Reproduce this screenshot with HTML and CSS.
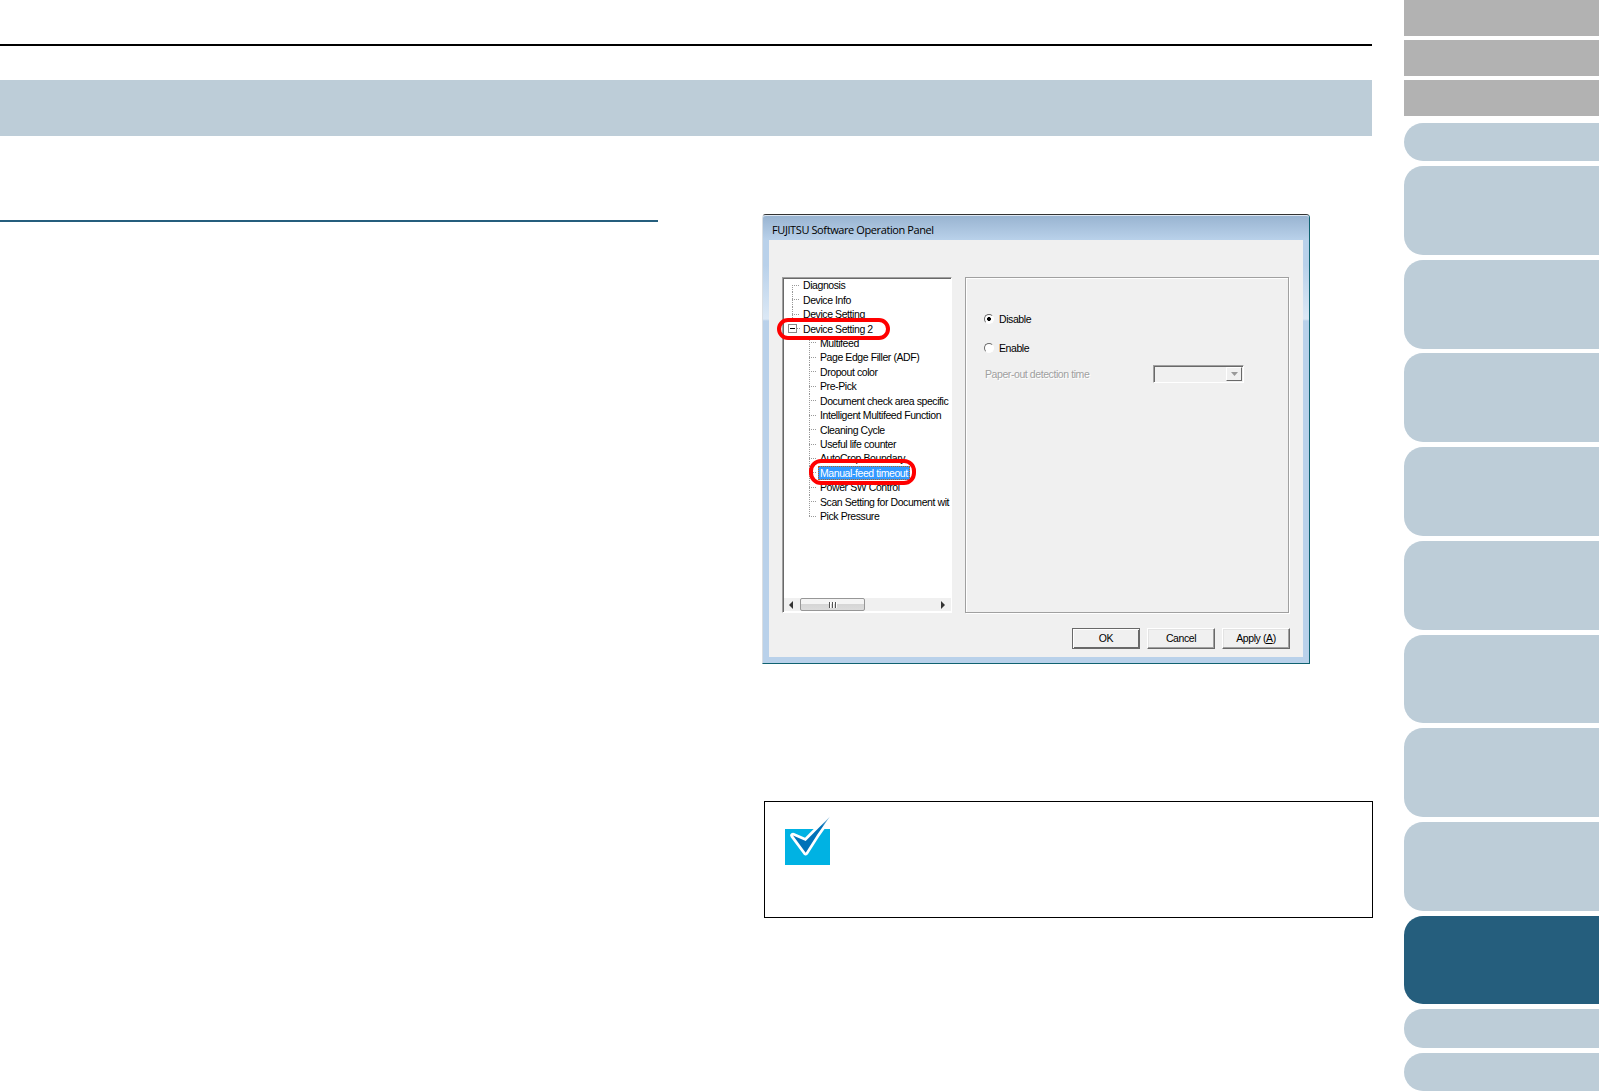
FILE: index.html
```html
<!DOCTYPE html>
<html lang="en">
<head>
    <meta charset="UTF-8">
    <meta name="viewport" content="width=device-width, initial-scale=1.0">
    <title>Manual-feed timeout</title>
    <link rel="stylesheet" href="styles.css">
</head>
<body>

    <main class="page">
        <div class="page-header"></div>
        <div class="banner"></div>

        <div class="columns">
            <div class="column-left"></div>

            <div class="column-right">
                <!-- Operation panel window -->
                <div class="dialog">
                    <div class="dialog-title">FUJITSU Software Operation Panel</div>
                    <div class="dialog-body">
                        <div class="panes">
                            <div class="tree">
                                <ul class="tree-list">
                                    <li class="first"><span>Diagnosis</span></li>
                                    <li><span>Device Info</span></li>
                                    <li><span>Device Setting</span></li>
                                    <li class="open"><i class="toggle"></i><span>Device Setting 2</span></li>
                                </ul>
                                <ul class="tree-list sub">
                                    <li><span>Multifeed</span></li>
                                    <li><span>Page Edge Filler (ADF)</span></li>
                                    <li><span>Dropout color</span></li>
                                    <li><span>Pre-Pick</span></li>
                                    <li><span>Document check area specific</span></li>
                                    <li><span>Intelligent Multifeed Function</span></li>
                                    <li><span>Cleaning Cycle</span></li>
                                    <li><span>Useful life counter</span></li>
                                    <li><span>AutoCrop Boundary</span></li>
                                    <li class="selected"><span>Manual-feed timeout</span></li>
                                    <li><span>Power SW Control</span></li>
                                    <li><span>Scan Setting for Document wit</span></li>
                                    <li class="last"><span>Pick Pressure</span></li>
                                </ul>
                                <div class="scrollbar">
                                    <svg width="4" height="8" viewBox="0 0 4 8"><path d="M4 0v8L0 4z" fill="#333"/></svg>
                                    <div class="thumb"><i></i><i></i><i></i></div>
                                    <svg width="4" height="8" viewBox="0 0 4 8"><path d="M0 0v8l4-4z" fill="#333"/></svg>
                                </div>
                            </div>

                            <div class="settings">
                                <label class="option"><i class="radio checked"></i>Disable</label>
                                <label class="option"><i class="radio"></i>Enable</label>
                                <div class="field">
                                    <span>Paper-out detection time</span>
                                    <div class="combo">
                                        <div class="combo-btn">
                                            <svg width="7" height="4" viewBox="0 0 7 4"><path d="M0 0h7L3.500 4z" fill="#999"/></svg>
                                        </div>
                                    </div>
                                </div>
                            </div>
                        </div>

                        <div class="buttons">
                            <div class="btn default">OK</div>
                            <div class="btn">Cancel</div>
                            <div class="btn">Apply (<u>A</u>)</div>
                        </div>
                    </div>
                    <div class="ring ring-parent"></div>
                    <div class="ring ring-child"></div>
                </div>

                <!-- Attention box -->
                <div class="note">
                    <svg width="46" height="50" viewBox="0 0 46 50">
                        <defs>
                            <linearGradient id="tick" x1="0" y1="1" x2="1" y2="0">
                                <stop offset="0.75" stop-color="#0071b8"/>
                                <stop offset="1" stop-color="#a9cde6"/>
                            </linearGradient>
                        </defs>
                        <path d="M0 13h45v36H0z" fill="#00b2e3"/>
                        <path d="M8 19.500L20.700 25 45 .5Q32 18 20.700 36.700z" fill="#fff" stroke="#fff" stroke-width="5.500" stroke-linejoin="round"/>
                        <path d="M8 19.500L20.700 25 45 .5Q32 18 20.700 36.700z" fill="url(#tick)"/>
                    </svg>
                </div>
            </div>
        </div>
    </main>

    <nav class="side">
        <div class="side-link"></div>
        <div class="side-link"></div>
        <div class="side-link"></div>
        <div class="tabs">
            <div class="tab short"></div>
            <div class="tab"></div>
            <div class="tab"></div>
            <div class="tab"></div>
            <div class="tab"></div>
            <div class="tab"></div>
            <div class="tab"></div>
            <div class="tab"></div>
            <div class="tab"></div>
            <div class="tab active"></div>
            <div class="tab short"></div>
            <div class="tab short"></div>
        </div>
    </nav>

</body>
</html>
```

FILE: styles.css
```css
* {
    box-sizing: border-box;
}

body {
    font-family: "Liberation Sans", Arial, sans-serif;
    margin: 0;
    display: flex;
    height: 1092px;
    overflow: hidden;
    background-color: #fff;
}

.page {
    width: 1373px;
    flex: none;
}

.page-header {
    width: 1372px;
    height: 46px;
    border-bottom: 2px solid #000;
}

.banner {
    width: 1372px;
    height: 56px;
    margin-top: 34px;
    background-color: #bdcdd8;
}

.columns {
    display: flex;
    justify-content: space-between;
    padding-top: 78px;
}

.column-left {
    width: 658px;
    height: 8px;
    border-bottom: 2px solid #255e7d;
}

.column-right {
    width: 611px;
}

/* Operation panel window */
.dialog {
    position: relative;
    width: 548px;
    height: 450px;
    padding: 0 6px 6px;
    border: 1px solid #0f6270;
    border-top-color: #333;
    border-left-color: #d9dee3;
    border-radius: 4px 4px 0 0;
    background: linear-gradient(#b9d1ea 0, #b9d1ea 50px, #dbe8f5 104px, #b9d1ea 106px);
    font-size: 10.5px;
    letter-spacing: -0.42px;
    color: #000;
}

.dialog-title {
    height: 25px;
    margin: 0 -6px;
    padding-left: 9px;
    border-top: 1px solid #dfe8f2;
    border-radius: 3px 3px 0 0;
    background: linear-gradient(#99b4d1, #b9d1ea);
    font-family: "Open Sans", "Noto Sans", sans-serif;
    font-size: 11px;
    line-height: 28px;
    letter-spacing: -0.4px;
    white-space: nowrap;
}

.dialog-body {
    height: 417px;
    padding: 37px 14px 0 13px;
    background-color: #f0f0f0;
}

.panes {
    display: flex;
    justify-content: space-between;
    height: 336px;
}

.tree {
    display: flex;
    flex-direction: column;
    width: 170px;
    border: 1px solid #a0a0a0;
    border-right-color: #fff;
    border-bottom-color: #fff;
    box-shadow: inset 1px 1px #696969;
    background-color: #fff;
    padding: 0 0 1px 1px;
    overflow: hidden;
}

.tree-list {
    list-style: none;
    margin: 0;
    padding: 0 0 0 8px;
}

.tree-list li {
    display: flex;
    align-items: center;
    height: 14.44px;
    white-space: nowrap;
    background:
        repeating-linear-gradient(90deg, #999 0 1px, transparent 1px 2px) 0 50% / 8px 1px no-repeat,
        repeating-linear-gradient(#999 0 1px, transparent 1px 2px) 0 0 / 1px 100% no-repeat;
    padding-left: 9px;
}

.tree-list span {
    padding: 0 2px;
    line-height: 14px;
}

.tree-list .first {
    background-position: 0 50%, 0 100%;
    background-size: 8px 1px, 1px 50%;
}

.tree-list .open {
    margin-left: -4px;
    padding-left: 0;
    background: repeating-linear-gradient(90deg, #999 0 1px, transparent 1px 2px) 9px 50% / 4px 1px no-repeat;
}

.toggle {
    width: 9px;
    height: 9px;
    margin-right: 4px;
    border: 1px solid #888;
    background: linear-gradient(#000, #000) 50% 50% / 5px 1px no-repeat;
}

.tree-list.sub {
    padding-left: 25px;
}

.tree-list .last {
    background-size: 8px 1px, 1px 50%;
}

.selected span {
    background-color: #3399ff;
    color: #fff;
    outline: 1px dotted #b5641e;
    outline-offset: -1px;
}

.scrollbar {
    display: flex;
    align-items: center;
    height: 13px;
    margin-top: auto;
    padding: 0 6px 0 5px;
    background-color: #f0f0f0;
}

.thumb {
    display: flex;
    align-items: center;
    justify-content: center;
    gap: 1px;
    width: 65px;
    height: 13px;
    margin: 0 auto 0 7px;
    border: 1px solid #979797;
    border-radius: 2px;
    background: linear-gradient(#f4f4f4 45%, #d6d6d6 50%, #dcdcdc);
}

.thumb i {
    width: 2px;
    height: 6px;
    background: linear-gradient(90deg, #555 50%, #fff 50%);
}

/* Settings pane */
.settings {
    width: 324px;
    padding: 33px 0 0 18px;
    border: 1px solid #a0a0a0;
    box-shadow: inset 1px 1px #fff, 1px 1px #fff;
}

.option {
    display: flex;
    align-items: center;
    height: 16px;
    margin-bottom: 13px;
}

.radio {
    width: 10px;
    height: 10px;
    margin-right: 5px;
    border: 1px solid #fff;
    border-top-color: #696969;
    border-left-color: #696969;
    border-radius: 50%;
    background-color: #fff;
}

.radio.checked {
    background: radial-gradient(circle, #000 1.8px, #fff 2.2px);
}

.field {
    display: flex;
    justify-content: space-between;
    align-items: center;
    width: 260px;
    height: 18px;
    margin-top: -4px;
    padding-left: 1px;
    color: #a0a0a0;
    text-shadow: 1px 1px #fff;
}

.combo {
    display: flex;
    justify-content: flex-end;
    width: 91px;
    height: 18px;
    padding: 1px;
    border: 1px solid #a0a0a0;
    border-right-color: #fff;
    border-bottom-color: #fff;
    box-shadow: inset 1px 1px #696969;
}

.combo-btn {
    display: flex;
    align-items: center;
    justify-content: center;
    width: 16px;
    border: 1px solid #fff;
    border-right-color: #696969;
    border-bottom-color: #696969;
}

.buttons {
    display: flex;
    justify-content: flex-end;
    gap: 7px;
    margin: 15px -1px 0 0;
}

.btn {
    width: 68px;
    height: 21px;
    border: 1px solid #fff;
    border-right-color: #696969;
    border-bottom-color: #696969;
    box-shadow: inset -1px -1px #a0a0a0, inset 1px 1px #e3e3e3;
    text-align: center;
    line-height: 19px;
}

.btn.default {
    border-color: #696969;
    box-shadow: inset 1px 1px #fff, inset -1px -1px #696969;
}

/* Red marks over the tree */
.ring {
    position: absolute;
    border: 4px solid #f00;
    border-radius: 12px;
}

.ring-parent {
    left: 14px;
    top: 103px;
    width: 113px;
    height: 22px;
}

.ring-child {
    left: 46px;
    top: 244px;
    width: 107px;
    height: 26px;
}

/* Attention box */
.note {
    width: 609px;
    height: 117px;
    margin: 137px 0 0 2px;
    padding: 14px 20px;
    border: 1px solid #000;
}

.note svg {
    display: block;
}

/* Side navigation */
.side {
    display: flex;
    flex-direction: column;
    gap: 4px;
    width: 195px;
    margin-left: 31px;
}

.side-link {
    flex: none;
    height: 36px;
    background-color: #b2b2b2;
}

.tabs {
    display: flex;
    flex-direction: column;
    gap: 4.9px;
    margin-top: 2.8px;
}

.tab {
    flex: none;
    height: 88.8px;
    border-radius: 19px 0 0 19px;
    background-color: #bdcdd8;
}

.tab.short {
    height: 38.4px;
}

.tab.active {
    background-color: #255e7d;
}
```
